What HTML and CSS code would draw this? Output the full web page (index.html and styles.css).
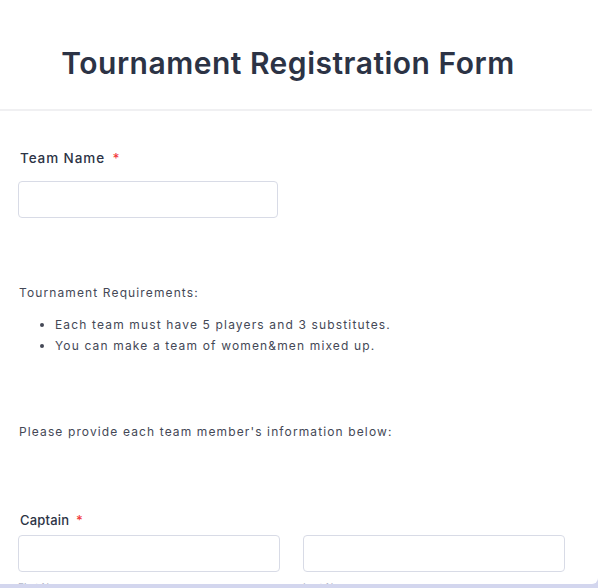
FILE: index.html
```html
<!DOCTYPE html>
<html>
<head>
<meta charset="utf-8">
<link rel="stylesheet" href="styles.css">
</head>
<body>
<div class="card">
  <header class="header">
    <h1 class="title">Tournament Registration Form</h1>
  </header>
  <section class="field field-team">
    <label class="label label-team">Team Name <span class="req">*</span></label>
    <div class="input input-single"></div>
  </section>
  <section class="text-block req-block">
    <p class="small">Tournament Requirements:</p>
    <ul class="list">
      <li>Each team must have 5 players and 3 substitutes.</li>
      <li>You can make a team of women&amp;men mixed up.</li>
    </ul>
  </section>
  <section class="text-block info-block">
    <p class="small">Please provide each team member's information below:</p>
  </section>
  <section class="field field-captain">
    <label class="label">Captain <span class="req">*</span></label>
    <div class="row">
      <div class="col">
        <div class="input"></div>
        <span class="sub">First Name</span>
      </div>
      <div class="col">
        <div class="input"></div>
        <span class="sub">Last Name</span>
      </div>
    </div>
  </section>
</div>
</body>
</html>
```

FILE: styles.css
```css
html, body {
  margin: 0;
  padding: 0;
}
body {
  background: #d3d6ee;
  font-family: Inter, "Noto Sans", sans-serif;
  color: #2c3345;
  width: 598px;
  height: 588px;
  overflow: hidden;
}
.card {
  background: #fff;
  height: 584px;
  width: 598px;
  border-bottom-right-radius: 6px;
  overflow: hidden;
}
.header {
  height: 109px;
  border-bottom: 2px solid #f0f0f2;
  display: flex;
  justify-content: center;
  align-items: flex-start;
  margin-right: 6px;
}
.title {
  margin: 43px 0 0 0;
  font-size: 30px;
  font-weight: 600;
  letter-spacing: 0.5px;
  color: #2c3345;
  line-height: 40px;
  position: relative;
  left: -8px;
}
.field {
  padding: 0 18px;
}
.field-team {
  padding-top: 38px;
}
.label {
  display: block;
  font-size: 13px;
  font-weight: 500;
  color: #2c3345;
  line-height: 18px;
  padding-left: 2px;
  margin-bottom: 14px;
  letter-spacing: 0.2px;
}
.label-team {
  font-size: 13.5px;
  letter-spacing: 0.9px;
}
.req {
  color: #f23a3c;
  margin-left: 3px;
}
.input {
  height: 35px;
  border: 1px solid #d8dbe6;
  border-radius: 4px;
  background: #fff;
}
.input-single {
  width: 258px;
}
.text-block {
  padding: 0 19px;
}
.req-block {
  padding-top: 66px;
}
.small {
  margin: 0;
  font-size: 12px;
  line-height: 18px;
  letter-spacing: 1.12px;
  color: #444856;
}
.list {
  margin: 12px 0 0 0;
  padding-left: 36px;
  font-size: 12px;
  line-height: 21px;
  letter-spacing: 1.15px;
  color: #444856;
}
.info-block {
  padding-top: 67px;
}
.field-captain {
  padding-top: 70px;
}
.field-captain .label {
  margin-bottom: 6px;
}
.row {
  display: flex;
  gap: 23px;
}
.col {
  width: 262px;
  display: flex;
  flex-direction: column;
}
.sub {
  font-size: 10px;
  color: #b4b7c8;
  margin-top: 9px;
}
```
